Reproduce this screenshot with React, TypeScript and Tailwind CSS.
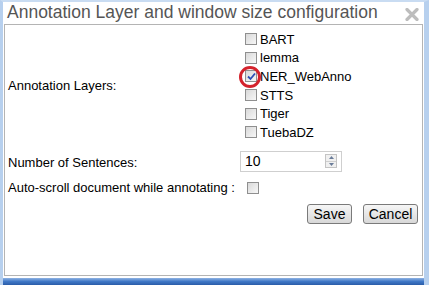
import { useState } from 'react';

const layers = ['BART', 'lemma', 'NER_WebAnno', 'STTS', 'Tiger', 'TuebaDZ'];

// Old-school XP style checkbox: grey frame, soft gradient fill, blue tick
function Check({ checked, onClick }: { checked: boolean; onClick: () => void }) {
  return (
    <span
      onClick={onClick}
      className="inline-flex h-[12px] w-[12px] shrink-0 items-center justify-center border border-[#8f8f8f] bg-gradient-to-br from-[#d9d9d9] to-[#f7f7f7]"
    >
      {checked && (
        <svg width="9" height="9" viewBox="0 0 9 9">
          <path d="M1 4.5 L3.5 7 L8 1.5" fill="none" stroke="#2b4fb5" strokeWidth="1.8" />
        </svg>
      )}
    </span>
  );
}

export default function App() {
  const [selected, setSelected] = useState<string[]>(['NER_WebAnno']);
  const [autoScroll, setAutoScroll] = useState(false);
  const [sentences, setSentences] = useState(10);

  const toggle = (name: string) =>
    setSelected((s) => (s.includes(name) ? s.filter((x) => x !== name) : [...s, name]));

  return (
    <div className="flex h-[285px] w-[429px] flex-col overflow-hidden border-t-2 border-l-[3px] border-r-[5px] border-t-[#c9dcf2] border-l-[#b7d0ee] border-r-[#b7d0ee] bg-white font-['Liberation_Sans',Arial,sans-serif] text-[13px] text-black">
      {/* Title bar */}
      <div className="flex h-[22px] items-center justify-between pl-[4px] pr-[5px]">
        <span className="text-[17.5px] leading-none text-[#555]">Annotation Layer and window size configuration</span>
        <svg width="14" height="13" viewBox="0 0 14 13" className="mt-[2px]">
          <path d="M2 1.5 L12 11.5 M12 1.5 L2 11.5" stroke="#bdbdbd" strokeWidth="3.2" strokeLinecap="round" />
        </svg>
      </div>

      {/* Content panel */}
      <div className="mx-px flex h-[252px] flex-col border border-[#b4b4b4] pl-[3px] pt-[5px]">
        <div className="flex">
          <div className="flex w-[232px] items-center">Annotation Layers:</div>
          <div className="relative flex flex-col pl-[5px]">
            {layers.map((l) => (
              <label key={l} className="flex h-[18.6px] items-center gap-[3px] leading-none">
                <Check checked={selected.includes(l)} onClick={() => toggle(l)} />
                <span>{l}</span>
              </label>
            ))}
            {/* red highlight ring around the checked layer */}
            <span className="pointer-events-none absolute left-[-1px] top-[36px] h-[22px] w-[22px] rounded-full border-[3px] border-[#d4222c]" />
          </div>
        </div>

        <div className="mt-[9px] flex h-[21px] items-center">
          <div className="w-[232px] pt-[4px]">Number of Sentences:</div>
          <div className="flex h-[21px] w-[102px] items-center justify-between border border-[#cfcfcf] pl-[4px] pr-[4px]">
            <span className="text-[14px]">{sentences}</span>
            <div className="flex h-[14px] w-[12px] flex-col border border-[#c4c4c4] bg-[#f0f0f0]">
              <button onClick={() => setSentences((n) => n + 1)} className="flex flex-1 items-center justify-center border-b border-[#cfcfcf]">
                <svg width="5" height="3" viewBox="0 0 5 3"><path d="M0 3 L2.5 0 L5 3Z" fill="#6a7c99" /></svg>
              </button>
              <button onClick={() => setSentences((n) => Math.max(1, n - 1))} className="flex flex-1 items-center justify-center">
                <svg width="5" height="3" viewBox="0 0 5 3"><path d="M0 0 L2.5 3 L5 0Z" fill="#6a7c99" /></svg>
              </button>
            </div>
          </div>
        </div>

        <div className="mt-[9px] flex h-[14px] items-center">
          <div className="w-[239px]">Auto-scroll document while annotating :</div>
          <Check checked={autoScroll} onClick={() => setAutoScroll(!autoScroll)} />
        </div>

        <div className="mt-[9px] flex justify-end gap-[11px] pr-[4px]">
          <button className="h-[20px] w-[45px] rounded-[3px] border border-[#7a7a7a] bg-gradient-to-b from-[#f6f6f6] to-[#d8d8d8] text-[14px] leading-none">
            Save
          </button>
          <button className="h-[20px] w-[55px] rounded-[3px] border border-[#7a7a7a] bg-gradient-to-b from-[#f6f6f6] to-[#d8d8d8] text-[14px] leading-none">
            Cancel
          </button>
        </div>
      </div>

      {/* bottom window frame */}
      <div className="mt-[2px] flex-1 bg-gradient-to-b from-[#8fb3e3] via-[#3f77c6] to-[#2a5ca8]" />
    </div>
  );
}
